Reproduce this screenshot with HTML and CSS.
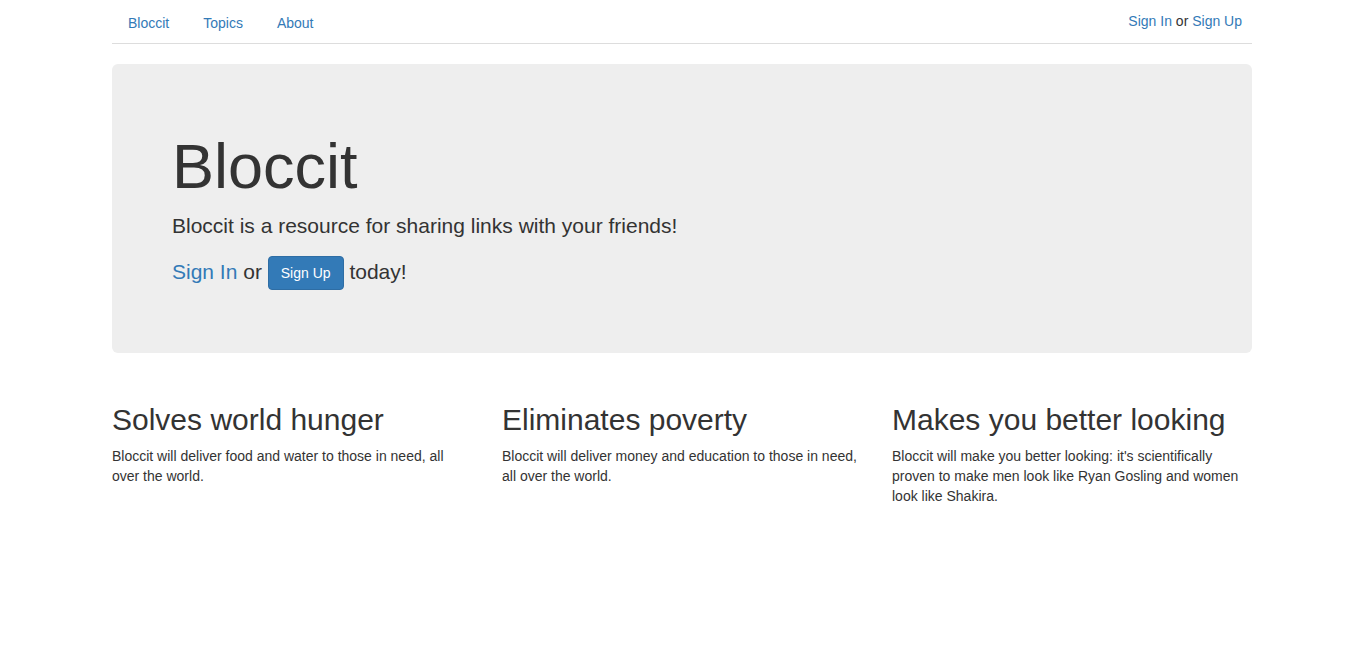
FILE: index.html
```html
<!DOCTYPE html>
<html lang="en">
<head>
<meta charset="utf-8">
<title>Bloccit</title>
<link rel="stylesheet" href="styles.css">
</head>
<body>
<div class="container">
  <div class="topnav">
    <ul class="nav-tabs">
      <li><a href="#">Bloccit</a></li>
      <li><a href="#">Topics</a></li>
      <li><a href="#">About</a></li>
    </ul>
    <div class="user-info"><a href="#">Sign In</a> or <a href="#">Sign Up</a></div>
  </div>

  <div class="jumbotron">
    <h1>Bloccit</h1>
    <p>Bloccit is a resource for sharing links with your friends!</p>
    <p><a href="#">Sign In</a> or <a href="#" class="btn">Sign Up</a> today!</p>
  </div>

  <div class="row">
    <div class="col">
      <h2>Solves world hunger</h2>
      <p>Bloccit will deliver food and water to those in need, all over the world.</p>
    </div>
    <div class="col">
      <h2>Eliminates poverty</h2>
      <p>Bloccit will deliver money and education to those in need, all over the world.</p>
    </div>
    <div class="col">
      <h2>Makes you better looking</h2>
      <p>Bloccit will make you better looking: it's scientifically proven to make men look like Ryan Gosling and women look like Shakira.</p>
    </div>
  </div>
</div>
</body>
</html>
```

FILE: styles.css
```css
* { box-sizing: border-box; }
html, body { margin: 0; padding: 0; }
body {
  font-family: "Liberation Sans", Arial, Helvetica, sans-serif;
  font-size: 14px;
  line-height: 1.42857143;
  color: #333;
  background: #fff;
}
a { color: #337ab7; text-decoration: none; }

.container {
  width: 1171px;
  margin: 0 auto;
  padding: 0 16px 0 15px;
}

.topnav {
  display: flex;
  justify-content: space-between;
  align-items: flex-start;
  border-bottom: 1px solid #ddd;
  padding-top: 2px;
}
.nav-tabs {
  list-style: none;
  margin: 0;
  padding: 0;
  display: flex;
}
.nav-tabs li { margin-right: 2px; margin-bottom: -1px; }
.nav-tabs a {
  display: block;
  padding: 10px 15px;
  border: 1px solid transparent;
  line-height: 20px;
}
.user-info {
  padding-top: 9px;
  padding-right: 10px;
  line-height: 20px;
}

.jumbotron {
  margin-top: 20px;
  margin-bottom: 30px;
  padding: 48px 60px;
  background: #eee;
  border-radius: 6px;
}
.jumbotron h1 {
  font-size: 63px;
  font-weight: 500;
  line-height: 1.1;
  margin: 20px 0 10px;
}
.jumbotron p {
  font-size: 21px;
  font-weight: 200;
  margin: 0 0 15px;
}
.btn {
  display: inline-block;
  padding: 6px 12px;
  font-size: 14px;
  line-height: 20px;
  color: #fff;
  background: #337ab7;
  border: 1px solid #2e6da4;
  border-radius: 4px;
  vertical-align: middle;
  font-weight: 400;
}

.row {
  display: flex;
  margin: 0 -15px;
}
.col {
  width: 390px;
  padding: 0 15px;
}
.col h2 {
  font-size: 30px;
  font-weight: 500;
  line-height: 1.1;
  margin: 20px 0 10px;
}
.col p { margin: 0 0 10px; }
```
